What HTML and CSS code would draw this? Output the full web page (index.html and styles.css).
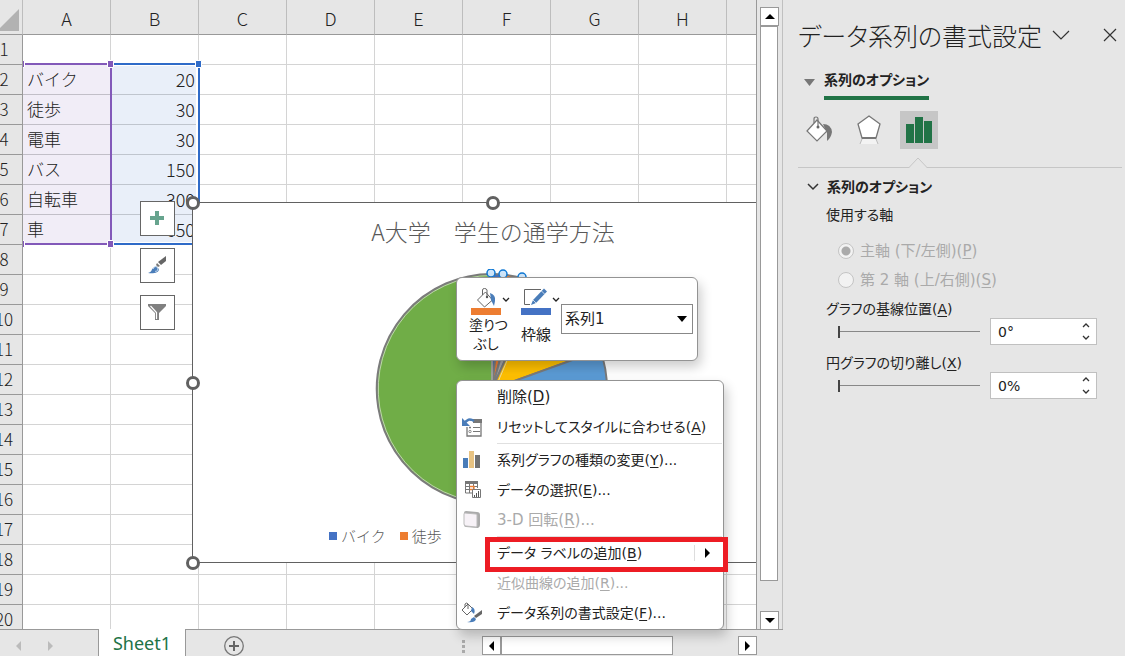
FILE: index.html
```
<!DOCTYPE html>
<html lang="ja">
<head>
<meta charset="utf-8">
<title>Sheet1</title>
<link rel="stylesheet" href="styles.css">
</head>
<body>
<div class="app">
  <main class="workbook">
    <div class="upper">
      <div class="viewport">
        <table class="grid">
          <thead>
            <tr><th class="corner" aria-label="すべて選択"><svg width="36" height="34" viewBox="0 0 36 34"><path d="M33 9V31H11z" fill="#b2b2b2"/></svg></th><th>A</th><th>B</th><th>C</th><th>D</th><th>E</th><th>F</th><th>G</th><th>H</th><th></th></tr>
          </thead>
          <tbody>
            <tr><th>1</th><td></td><td></td><td></td><td></td><td></td><td></td><td></td><td></td><td></td></tr>
            <tr><th>2</th><td class="cat">バイク</td><td class="val">20</td><td></td><td></td><td></td><td></td><td></td><td></td><td></td></tr>
            <tr><th>3</th><td class="cat">徒歩</td><td class="val">30</td><td></td><td></td><td></td><td></td><td></td><td></td><td></td></tr>
            <tr><th>4</th><td class="cat">電車</td><td class="val">30</td><td></td><td></td><td></td><td></td><td></td><td></td><td></td></tr>
            <tr><th>5</th><td class="cat">バス</td><td class="val">150</td><td></td><td></td><td></td><td></td><td></td><td></td><td></td></tr>
            <tr><th>6</th><td class="cat">自転車</td><td class="val">300</td><td></td><td></td><td></td><td></td><td></td><td></td><td></td></tr>
            <tr><th>7</th><td class="cat">車</td><td class="val">650</td><td></td><td></td><td></td><td></td><td></td><td></td><td></td></tr>
            <tr><th>8</th><td></td><td></td><td></td><td></td><td></td><td></td><td></td><td></td><td></td></tr>
            <tr><th>9</th><td></td><td></td><td></td><td></td><td></td><td></td><td></td><td></td><td></td></tr>
            <tr><th>10</th><td></td><td></td><td></td><td></td><td></td><td></td><td></td><td></td><td></td></tr>
            <tr><th>11</th><td></td><td></td><td></td><td></td><td></td><td></td><td></td><td></td><td></td></tr>
            <tr><th>12</th><td></td><td></td><td></td><td></td><td></td><td></td><td></td><td></td><td></td></tr>
            <tr><th>13</th><td></td><td></td><td></td><td></td><td></td><td></td><td></td><td></td><td></td></tr>
            <tr><th>14</th><td></td><td></td><td></td><td></td><td></td><td></td><td></td><td></td><td></td></tr>
            <tr><th>15</th><td></td><td></td><td></td><td></td><td></td><td></td><td></td><td></td><td></td></tr>
            <tr><th>16</th><td></td><td></td><td></td><td></td><td></td><td></td><td></td><td></td><td></td></tr>
            <tr><th>17</th><td></td><td></td><td></td><td></td><td></td><td></td><td></td><td></td><td></td></tr>
            <tr><th>18</th><td></td><td></td><td></td><td></td><td></td><td></td><td></td><td></td><td></td></tr>
            <tr><th>19</th><td></td><td></td><td></td><td></td><td></td><td></td><td></td><td></td><td></td></tr>
            <tr><th>20</th><td></td><td></td><td></td><td></td><td></td><td></td><td></td><td></td><td></td></tr>
          </tbody>
        </table>
        <svg class="ranges" width="180" height="190" viewBox="0 0 180 190">
          <path d="M88 4H175V184H88" fill="none" stroke="#fff" stroke-width="4"/>
          <path d="M88 4H176V184H88" fill="none" stroke="#2f6bc8" stroke-width="2"/>
          <path d="M0 4H88V184H0" fill="none" stroke="#8259b9" stroke-width="2"/>
          <g stroke="#fff" fill="#8259b9"><path d="M84.500 .5h6v7h-6zM84.500 180.500h6v7h-6zM-3.500 .5h5v7h-5zM-3.500 180.500h5v7h-5z"/><path d="M172.500 .5h6v7h-6z" fill="#2f6bc8"/></g>
        </svg>
        <section class="chart">
          <h1 class="chart-title">A大学　学生の通学方法</h1>
          <svg class="pie" width="240" height="240" viewBox="-120 -120 240 240">
            <g stroke="#7b7b7b" stroke-width="2">
              <path d="M0 0L0-115A115 115 0 0 1 12.200-114.300z" fill="#4472c4"/>
              <path d="M0 0L12.200-114.300A115 115 0 0 1 30.200-110.900z" fill="#ed7d31"/>
              <path d="M0 0L30.200-110.900A115 115 0 0 1 47.500-104.700z" fill="#a5a5a5"/>
              <path d="M0 0L47.500-104.700A115 115 0 0 1 108.200-39z" fill="#ffc000"/>
              <path d="M0 0L108.200-39A115 115 0 0 1 36.100 109.100z" fill="#5b9bd5"/>
              <path d="M0 0L36.100 109.100A115 115 0 1 1 0-115z" fill="#70ad47"/>
            </g>
            <path d="M0 0V-113.500M0-113.500A113.500 113.500 0 1 0 35.600 107.700" fill="none" stroke="#dfe8d8" stroke-width=".7"/>
            <path d="M3 0L47-104L107-39" fill="none" stroke="#e8e8e8" stroke-width=".7"/>
            <g fill="#cfe6fa" stroke="#0f78d4" stroke-width="1.500"><circle cx="-1" cy="-116" r="4"/><circle cx="11" cy="-115" r="4"/><circle cx="30" cy="-112" r="4"/></g>
          </svg>
          <ul class="legend"><li class="k1">バイク</li><li class="k2">徒歩</li><li class="k3">電車</li><li class="k4">バス</li><li class="k5">自転車</li><li class="k6">車</li></ul>
          <i class="handle h-tl"></i><i class="handle h-tc"></i><i class="handle h-ml"></i><i class="handle h-bl"></i>
        </section>
        <div class="chart-tools">
          <button aria-label="グラフ要素"><svg width="33" height="33" viewBox="0 0 33 33"><path d="M14 9h4v5h5v4h-5v5h-4v-5H9v-4h5z" fill="#67a48e"/></svg></button>
          <button aria-label="グラフ スタイル"><svg width="33" height="33" viewBox="0 0 33 33"><path d="M25 7v5l-5 4-3-3z" fill="#666"/><path d="M16 14l3 3-2 1-2-2z" fill="#777"/><path d="M7 24c4-1 3-3 5-5l3-2 3 3c0 4-6 5-11 4z" fill="#4a7db9"/><path d="M12 20c1-3 3-3 5-1 0 3-2 4-3 3" fill="none" stroke="#d9e8f5"/></svg></button>
          <button aria-label="グラフ フィルター"><svg width="33" height="33" viewBox="0 0 33 33"><path d="M7 8h18v2l-7 7v7h-4v-7l-7-7z" fill="#808080"/><path d="M9.500 10l6 6.500V23" fill="none" stroke="#fff" stroke-width="1.200"/></svg></button>
        </div>
      </div>
      <div class="vscroll">
        <button aria-label="上へ"><svg width="10" height="5"><path d="M0 5L5 0l5 5z"/></svg></button>
        <div class="vthumb"></div>
        <button class="end" aria-label="下へ"><svg width="10" height="5"><path d="M0 0h10L5 5z"/></svg></button>
      </div>
    </div>
    <footer class="bottom">
      <div class="tab-nav"><svg width="6" height="10"><path d="M5 0v10L0 5z"/></svg><svg width="6" height="10"><path d="M0 0v10l5-5z"/></svg></div>
      <button class="sheet-tab">Sheet1</button>
      <button class="add-sheet" aria-label="新しいシート"><svg width="22" height="22" viewBox="0 0 22 22"><circle cx="11" cy="11" r="9.300" fill="none" stroke="#777" stroke-width="1.300"/><path d="M11 6v10M6 11h10" stroke="#666" stroke-width="2"/></svg></button>
      <span class="grip"><i></i><i></i><i></i></span>
      <div class="hscroll">
        <button aria-label="左へ"><svg width="5" height="10"><path d="M5 0v10L0 5z"/></svg></button>
        <div class="hthumb"></div>
        <button class="end" aria-label="右へ"><svg width="5" height="10"><path d="M0 0v10l5-5z"/></svg></button>
      </div>
    </footer>

    <div class="mini-toolbar">
      <button class="mini fill-btn">
        <svg width="42" height="30" viewBox="0 0 42 30"><path d="M8.500 14l8-8 7 8-8 7z" fill="#fff" stroke="#666"/><path d="M13.500 9V4q0-1.500 2-1.500T18 4v7" fill="none" stroke="#666"/><circle cx="18" cy="11" r="1.200" fill="#555"/><path d="M21 7q6 2 5 8l-1 5-3-6z" fill="#4a7db9"/><path d="M34 12l3 3 3-3" fill="none" stroke="#222" stroke-width="1.300"/><path d="M2 22h30v7H2z" fill="#ed7d31"/></svg>
        <span>塗りつ<br>ぶし</span>
      </button>
      <button class="mini line-btn">
        <svg width="42" height="30" viewBox="0 0 42 30"><path d="M22 3.500H5.500v15H11" fill="none" stroke="#666"/><path d="M14 14L25 2.500l3 3L17 17l-5 2z" fill="#4a7db9"/><path d="M22.500 5l3 3M14 14l3 3" stroke="#fff" stroke-width=".7"/><path d="M34 12l3 3 3-3" fill="none" stroke="#222" stroke-width="1.300"/><path d="M2 22h30v7H2z" fill="#4472c4"/></svg>
        <span>枠線</span>
      </button>
      <div class="combo"><select aria-label="グラフ要素"><option>系列1</option></select><svg width="10" height="6"><path d="M0 0h10L5 6z"/></svg></div>
    </div>

    <div class="menu" role="menu">
      <button role="menuitem"><span class="ico"></span><span>削除(<u>D</u>)</span></button>
      <button role="menuitem" class="kana"><span class="ico"><svg width="22" height="22" viewBox="0 0 22 22"><path d="M9 4h11v16H6V11" fill="none" stroke="#777" stroke-width="1.300"/><path d="M12 3h9v4h-9z" fill="#777"/><path d="M12 11.500h7M12 15.500h7" stroke="#777"/><path d="M9 10.500v2M8 11.500h2" stroke="#777"/><circle cx="9" cy="15.500" r="1.200" fill="none" stroke="#777" stroke-width=".8"/><path d="M3 8Q7 1 13 5" fill="none" stroke="#4a7db9" stroke-width="2.500"/><path d="M1 2v8h8z" fill="#4a7db9"/></svg></span><span>リセットしてスタイルに合わせる(<u>A</u>)</span></button>
      <hr>
      <button role="menuitem" class="kana"><span class="ico"><svg width="22" height="22" viewBox="0 0 22 22"><path d="M2 9h5v10H2z" fill="#4a7db9"/><path d="M8 2h5v17H8z" fill="#e8c382"/><path d="M14 6h5v13h-5z" fill="#727272"/></svg></span><span>系列グラフの種類の変更(<u>Y</u>)...</span></button>
      <button role="menuitem" class="kana"><span class="ico"><svg width="22" height="22" viewBox="0 0 22 22"><path d="M4 2h13v3H4z" fill="#777"/><path d="M4.500 4v10H11M4 7.500h12M4 10.500h8M8.500 5v9M12.500 5v5M16.500 5v4" fill="none" stroke="#777"/><path d="M9 7.500h4v3H9" fill="none" stroke="#ed7d31" stroke-width="1.300"/><path d="M11.500 10.500h8v8h-8z" fill="#fff" stroke="#777"/><path d="M13.500 18v-2M15.500 18v-4M17.500 18v-6" stroke="#555"/></svg></span><span>データの選択(<u>E</u>)...</span></button>
      <button role="menuitem" disabled><span class="ico"><svg width="22" height="22" viewBox="0 0 22 22"><path d="M3 4q0-2 2-2l11 1q3 0 3 3v10q0 2-2 3l-12-1q-2 0-2-2z" fill="#aaa"/><path d="M3 5q0-1 1-1l11 1q1 0 1 1v11q0 1-1 1L5 17q-2 0-2-2z" fill="#f7f2f7" stroke="#bbb"/></svg></span><span>3-D 回転(<u>R</u>)...</span></button>
      <hr>
      <button role="menuitem" class="kana"><span class="ico"></span><span>データ ラベルの追加(<u>B</u>)</span><span class="sub"><svg width="5" height="10"><path d="M0 0v10l5-5z"/></svg></span></button>
      <button role="menuitem" class="kana" disabled><span class="ico"></span><span>近似曲線の追加(<u>R</u>)...</span></button>
      <button role="menuitem" class="kana"><span class="ico"><svg width="22" height="22" viewBox="0 0 22 22"><path d="M1 8l6-6 5 5-6 6z" fill="#fff" stroke="#666"/><path d="M4 5V2q2-2 3 0v5" fill="none" stroke="#666"/><path d="M11 5q4 2 2 7l-3-3z" fill="#4a7db9"/><path d="M21 8v4l-6 4-2-2z" fill="#666"/><path d="M6 20q4 0 4-3l3-2 2 2q-1 4-9 3z" fill="#4a7db9"/></svg></span><span>データ系列の書式設定(<u>F</u>)...</span></button>
    </div>
    <div class="callout"></div>
  </main>

  <aside class="pane">
    <header class="pane-head">
      <h2>データ系列の書式設定</h2>
      <button aria-label="オプション"><svg width="18" height="10"><path d="M1 1l8 8 8-8" fill="none" stroke="#333" stroke-width="1.200"/></svg></button>
      <button class="close" aria-label="閉じる"><svg width="14" height="14"><path d="M1 1l12 12M13 1L1 13" stroke="#333" stroke-width="1.200"/></svg></button>
    </header>
    <div class="pane-tab"><svg width="11" height="7"><path d="M0 0h11L5.500 7z" fill="#777"/></svg><button>系列のオプション</button></div>
    <div class="pane-icons">
      <button aria-label="塗りつぶしと線"><svg width="38" height="38" viewBox="0 0 38 38"><path d="M23 13q8 0 9 8-1 6-5 9V22z" fill="#777"/><path d="M7 20L17 9l10 11-10 10z" fill="#fff" stroke="#777" stroke-width="1.200"/><path d="M14 12V8q0-2 2-2t2 2v8" fill="none" stroke="#777" stroke-width="1.200"/><circle cx="18" cy="16" r="1.500" fill="#666"/></svg></button>
      <button aria-label="効果"><svg width="38" height="38" viewBox="0 0 38 38"><path d="M12 28h14l2 5H10z" fill="#f3f3f3"/><path d="M12 28l-2 5M26 28l2 5" stroke="#bbb"/><path d="M19 5l11 8-4 14H12L8 13z" fill="#fff" stroke="#777" stroke-width="1.300"/><path d="M12 27h14" stroke="#777" stroke-width="2"/></svg></button>
      <button class="on" aria-label="系列のオプション"><svg width="38" height="38" viewBox="0 0 38 38"><path d="M6 13h8v19H6zM15 6h8v26h-8zM24 10h8v22h-8z" fill="#217346"/></svg></button>
    </div>
    <div class="divider"><svg width="18" height="11"><path d="M0 11L9 1l9 10z" fill="#e6e6e6"/><path d="M0 10.500L9 1l9 9.500" fill="none" stroke="#c6c6c6"/></svg></div>
    <button class="section"><svg width="12" height="8"><path d="M1 1l5 5 5-5" fill="none" stroke="#333" stroke-width="1.500"/></svg>系列のオプション</button>
    <div class="fields">
      <p class="axis">使用する軸</p>
      <label class="radio"><input type="radio" name="axis" checked disabled><span>主軸 (下/左側)(<u>P</u>)</span></label>
      <label class="radio"><input type="radio" name="axis" disabled><span>第 2 軸 (上/右側)(<u>S</u>)</span></label>
      <div class="field">
        <label for="angle">グラフの基線位置(<u>A</u>)</label>
        <div class="control"><input type="range" min="0" max="360" value="0" aria-label="グラフの基線位置"><span class="spin"><input id="angle" type="text" value="0°"><span class="steps"><button aria-label="増"><svg width="8" height="5"><path d="M1 4l3-3 3 3"/></svg></button><button aria-label="減"><svg width="8" height="5"><path d="M1 1l3 3 3-3"/></svg></button></span></span></div>
      </div>
      <div class="field">
        <label for="explode">円グラフの切り離し(<u>X</u>)</label>
        <div class="control"><input type="range" min="0" max="400" value="0" aria-label="円グラフの切り離し"><span class="spin"><input id="explode" type="text" value="0%"><span class="steps"><button aria-label="増"><svg width="8" height="5"><path d="M1 4l3-3 3 3"/></svg></button><button aria-label="減"><svg width="8" height="5"><path d="M1 1l3 3 3-3"/></svg></button></span></span></div>
      </div>
    </div>
  </aside>
</div>
</body>
</html>
```
FILE: styles.css
```
* { box-sizing: border-box; }
body {
  margin: 0;
  background: #e6e6e6;
  color: #222;
  font: 15px/20px "DejaVu Sans", "Noto Sans CJK JP", sans-serif;
  font-feature-settings: "palt";
}
button { border: 0; padding: 0; background: none; color: inherit; font: inherit; font-feature-settings: inherit; text-align: left; }
svg { display: block; flex: none; }
u { text-underline-offset: 2px; text-decoration-thickness: 1px; }
.app { display: flex; height: 100vh; overflow: hidden; }

/* Workbook */
.workbook { position: relative; flex: 1; min-width: 0; display: flex; flex-direction: column; }
.upper { flex: 1; min-height: 0; display: flex; }
.viewport { position: relative; flex: 1; min-width: 0; overflow: hidden; border-right: 1px solid #999; }
.grid {
  table-layout: fixed; width: 829px; margin-left: -14px;
  border-collapse: separate; border-spacing: 0;
  font-family: "Noto Sans CJK JP", sans-serif; font-size: 17px; font-weight: 300; font-feature-settings: normal;
  background: #fff;
}
.grid th, .grid td { height: 30px; padding: 0 0 2px; border: 0 solid #d4d4d4; border-width: 0 1px 1px 0; line-height: 24px; white-space: nowrap; font-weight: 300; }
.grid th { background: #e6e6e6; border-color: #999; color: #222; }
.grid thead th { height: 35px; padding-top: 4px; font-size: 18px; border-right-color: #bdbdbd; }
.grid thead .corner { width: 37px; padding: 0; }
.grid .cat { background: #f1edf7; border-color: #c2bfc8; padding-left: 4px; }
.grid .val { background: #e9eff9; border-color: #bfc5ce; padding-right: 3px; text-align: right; font-size: 18px; }
.ranges { position: absolute; left: 23px; top: 60px; }

/* Chart */
.chart { position: absolute; left: 192px; top: 202px; width: 602px; height: 361px; border: 1px solid #616161; background: #fff; color: #595959; font-family: "Noto Sans CJK JP", sans-serif; font-weight: 300; font-feature-settings: normal; }
.chart-title { margin: 0; padding-top: 13px; text-align: center; font-size: 23px; line-height: 30px; font-weight: 300; }
.pie { position: absolute; left: 179px; top: 66px; }
.legend { position: absolute; left: 136px; bottom: 15px; display: flex; gap: 14px; margin: 0; padding: 0; list-style: none; white-space: nowrap; font-size: 15px; line-height: 22px; }
.legend li { display: flex; align-items: center; gap: 4px; }
.legend li::before { content: ""; width: 8px; height: 8px; background: #4472c4; }
.legend .k2::before { background: #ed7d31; }
.legend .k3::before { background: #a5a5a5; }
.legend .k4::before { background: #ffc000; }
.legend .k5::before { background: #5b9bd5; }
.legend .k6::before { background: #70ad47; }
.handle { position: absolute; width: 14px; height: 14px; border: 3px solid #616161; border-radius: 50%; background: #fff; }
.h-tl { left: -7px; top: -7px; }
.h-tc { left: 293px; top: -7px; }
.h-ml { left: -7px; top: 173px; }
.h-bl { left: -7px; bottom: -8px; }
.chart-tools { position: absolute; left: 140px; top: 201px; display: grid; gap: 12px; }
.chart-tools button { border: 1px solid #666; background: #fff; }

/* Scroll bars and sheet tabs */
.vscroll { width: 26px; margin-bottom: -1px; padding: 7px 4px 0 3px; border-right: 1px solid #c0c0c0; display: flex; flex-direction: column; }
.vscroll button, .hscroll button { width: 19px; height: 19px; display: grid; place-items: center; border: 1px solid #999; background: #fff; }
.vthumb { flex: 1; margin-bottom: 30px; border: 1px solid #999; background: #fff; }
.bottom { height: 27px; display: flex; align-items: stretch; border-top: 1px solid #999; }
.tab-nav { width: 98px; display: flex; gap: 26px; padding: 11px 0 0 16px; fill: #bbb; }
.sheet-tab { width: 88px; margin-top: -1px; border: 1px solid #999; border-width: 0 1px; background: #fff; color: #217346; font: 18px/28px "Noto Sans", sans-serif; text-align: center; }
.add-sheet { margin: 5px 0 0 37px; }
.grip { margin: 10px 17px 0 auto; display: grid; align-content: start; gap: 2px; }
.grip i { width: 3px; height: 3px; background: #aaa; }
.hscroll { width: 275px; margin-right: 26px; padding-top: 6px; display: flex; }
.hthumb { width: 172px; height: 19px; border: 1px solid #999; background: #fff; }
.hscroll .end { margin-left: auto; }

/* Floating toolbar and context menu */
.mini-toolbar, .menu { position: absolute; left: 456px; border: 1px solid #939393; border-radius: 6px; background: #fff; box-shadow: 3px 6px 12px rgba(0, 0, 0, .2); }
.mini-toolbar { top: 277px; width: 242px; height: 84px; padding: 8px 4px 0 12px; display: flex; gap: 8px; }
.mini { width: 42px; display: flex; flex-direction: column; font-size: 14px; line-height: 19px; white-space: nowrap; }
.mini span { width: 34px; text-align: center; }
.line-btn span { margin-top: 10px; font-size: 15px; }
.combo { position: relative; flex: 1; margin: 18px 0 0 -8px; height: 30px; }
.combo select { width: 100%; height: 100%; padding: 0 3px; appearance: none; border: 1px solid #888; border-radius: 0; background: #fff; color: inherit; font: inherit; }
.combo svg { position: absolute; right: 6px; top: 12px; }
.menu { top: 380px; width: 268px; padding: 1px 0; }
.menu button { width: 100%; height: 30px; display: flex; align-items: center; white-space: nowrap; }
.menu .kana { font-size: 14px; }
.menu button:disabled { color: #aaa; }
.menu hr { height: 1px; margin: 1px 1px 1px 40px; border: 0; background: #e0e0e0; }
.ico { width: 36px; margin-left: 4px; }
.sub { width: 29px; height: 16px; margin-left: auto; padding: 3px 0 0 10px; border-left: 1px solid #ddd; }
.callout { position: absolute; left: 485px; top: 537px; width: 243px; height: 35px; border: 5px solid #ed1c24; pointer-events: none; }

/* Format pane */
.pane { width: 342px; padding: 16px 3px 0 15px; }
.pane-head { height: 38px; display: flex; align-items: center; }
.pane-head h2 { margin: 0 10px 0 0; font-size: 25px; line-height: 38px; font-weight: 300; white-space: nowrap; font-family: "Noto Sans CJK JP", sans-serif; }
.pane-head .close { margin: 0 5px 0 auto; }
.pane-tab { margin-top: 10px; padding-left: 6px; display: flex; align-items: center; gap: 9px; }
.pane-tab button { height: 36px; border-bottom: 4px solid #217346; font-size: 14px; font-weight: 700; line-height: 32px; }
.pane-icons { margin: 11px 0 0 2px; display: flex; gap: 12px; }
.pane-icons .on { background: #c6c6c6; }
.divider { height: 19px; border-bottom: 1px solid #c6c6c6; padding: 8px 0 0 111px; }
.section { height: 28px; margin-top: 5px; padding-left: 9px; display: flex; align-items: center; gap: 8px; font-size: 14px; font-weight: 700; }
.fields { padding-left: 28px; }
.axis { margin: 0 0 7px; font-size: 14px; line-height: 28px; }
.radio { height: 29px; display: flex; align-items: center; gap: 6px; padding-left: 12px; color: #aaa; }
.radio input { appearance: none; width: 16px; height: 16px; margin: 0; border: 1px solid #c4c4c4; border-radius: 50%; background: #f2f2f2; }
.radio input:checked { background: radial-gradient(#aaa 0 4px, #f2f2f2 5px); }
.field { margin-top: 6px; }
.field + .field { margin-top: 9px; }
.field label { display: block; font-size: 14px; line-height: 18px; }
.control { display: flex; gap: 10px; padding: 0 25px 0 12px; }
.control input[type="range"] { appearance: none; flex: 1; min-width: 0; height: 27px; margin: 0; background: linear-gradient(#888, #888) center / 100% 1px no-repeat; }
.control input[type="range"]::-webkit-slider-thumb { appearance: none; width: 2px; height: 12px; background: #444; }
.spin { width: 107px; height: 27px; display: flex; border: 1px solid #c0c0c0; background: #fff; }
.spin input { flex: 1; min-width: 0; padding: 0 7px; border: 0; background: none; color: inherit; font: inherit; font-size: 14px; }
.steps { width: 14px; display: grid; align-content: space-between; padding: 4px 0; }
.steps svg { fill: none; stroke: #333; stroke-width: 1.3; }
```
